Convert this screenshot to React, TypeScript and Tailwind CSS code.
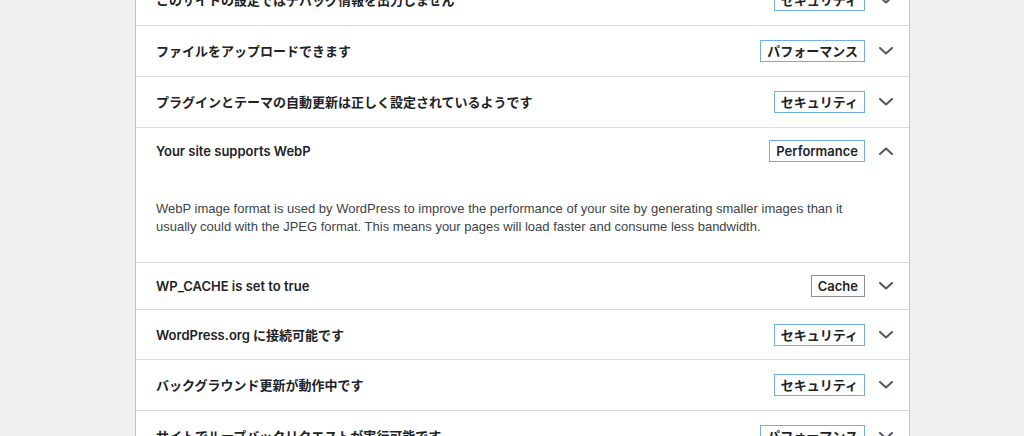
import React from "react";

type Item = {
  title: string;
  badge: string;
  tone: "blue" | "gray";
  h: string;
  open?: boolean;
  body?: string;
};

const items: Item[] = [
  { title: "このサイトの設定ではデバッグ情報を出力しません", badge: "セキュリティ", tone: "blue", h: "h-[50px]" },
  { title: "ファイルをアップロードできます", badge: "パフォーマンス", tone: "blue", h: "h-[50px]" },
  { title: "プラグインとテーマの自動更新は正しく設定されているようです", badge: "セキュリティ", tone: "blue", h: "h-[50px]" },
  {
    title: "Your site supports WebP",
    badge: "Performance",
    tone: "blue",
    h: "h-[46px]",
    open: true,
    body:
      "WebP image format is used by WordPress to improve the performance of your site by generating smaller images than it usually could with the JPEG format. This means your pages will load faster and consume less bandwidth.",
  },
  { title: "WP_CACHE is set to true", badge: "Cache", tone: "gray", h: "h-[46px]" },
  { title: "WordPress.org に接続可能です", badge: "セキュリティ", tone: "blue", h: "h-[49px]" },
  { title: "バックグラウンド更新が動作中です", badge: "セキュリティ", tone: "blue", h: "h-[50px]" },
  { title: "サイトでループバックリクエストが実行可能です", badge: "パフォーマンス", tone: "blue", h: "h-[50px]" },
];

function Chevron({ up }: { up?: boolean }) {
  return (
    <svg width="14" height="8" viewBox="0 0 14 8" fill="none" className="shrink-0">
      <polyline
        points={up ? "1,7 7,1.5 13,7" : "1,1 7,6.5 13,1"}
        stroke="#50575e"
        strokeWidth="2"
        strokeLinecap="round"
        strokeLinejoin="round"
      />
    </svg>
  );
}

function Row({ item, first }: { item: Item; first: boolean }) {
  return (
    <div className={first ? "" : "border-t border-[#dcdcde]"}>
      <div className={`flex items-center pl-[20px] pr-[16px] ${item.h}`}>
        <div className="flex-1 pt-[2px] text-[13px] font-semibold text-[#1d2327]">{item.title}</div>
        <span
          className={`mr-[14px] border px-[6px] text-[13px] leading-[20px] font-semibold text-[#1d2327] ${
            item.tone === "blue" ? "border-[#72aee6]" : "border-[#8c8f94]"
          }`}
        >
          {item.badge}
        </span>
        <Chevron up={item.open} />
      </div>
      {item.open && (
        <p
          className="pl-[20px] pr-[40px] pt-[26px] pb-[26px] text-[13px] leading-[18px] text-[#3c434a]"
          style={{ fontFamily: '"Liberation Sans", Arial, sans-serif' }}
        >
          {item.body}
        </p>
      )}
    </div>
  );
}

export default function App() {
  return (
    <div
      className="h-[436px] overflow-hidden bg-[#f0f0f1]"
      style={{ fontFamily: 'Inter, "Noto Sans CJK JP", sans-serif' }}
    >
      <div className="ml-[135px] -mt-[25px] w-[775px] border-x border-[#c3c4c7] bg-white">
        {items.map((item, i) => (
          <Row key={i} item={item} first={i === 0} />
        ))}
      </div>
    </div>
  );
}
